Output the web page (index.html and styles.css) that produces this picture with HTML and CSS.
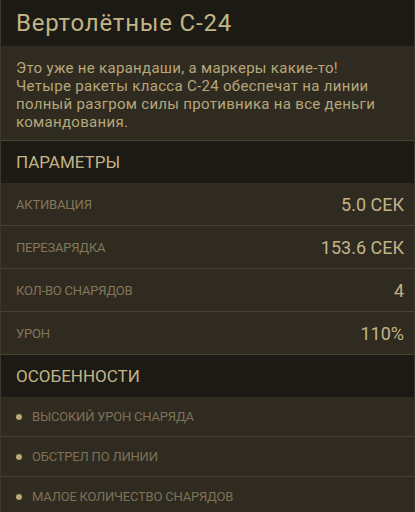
FILE: index.html
```html
<!DOCTYPE html>
<html lang="ru">
<head>
    <meta charset="UTF-8">
    <meta name="viewport" content="width=device-width, initial-scale=1.0">
    <title>Вертолётные С-24</title>
    <link rel="stylesheet" href="styles.css">
</head>
<body>
    <div class="panel">
        <header class="title">
            <h1>Вертолётные С-24</h1>
        </header>
        <p class="desc">Это уже не карандаши, а маркеры какие-то!<br>Четыре ракеты класса С-24 обеспечат на линии полный разгром силы противника на все деньги командования.</p>

        <h2 class="section">ПАРАМЕТРЫ</h2>
        <div class="stat">
            <span class="stat-name">АКТИВАЦИЯ</span>
            <span class="stat-value">5.0 СЕК</span>
        </div>
        <div class="stat">
            <span class="stat-name">ПЕРЕЗАРЯДКА</span>
            <span class="stat-value">153.6 СЕК</span>
        </div>
        <div class="stat">
            <span class="stat-name">КОЛ-ВО СНАРЯДОВ</span>
            <span class="stat-value">4</span>
        </div>
        <div class="stat">
            <span class="stat-name">УРОН</span>
            <span class="stat-value">110%</span>
        </div>

        <h2 class="section">ОСОБЕННОСТИ</h2>
        <ul class="features">
            <li>ВЫСОКИЙ УРОН СНАРЯДА</li>
            <li>ОБСТРЕЛ ПО ЛИНИИ</li>
            <li>МАЛОЕ КОЛИЧЕСТВО СНАРЯДОВ</li>
        </ul>
    </div>
</body>
</html>
```

FILE: styles.css
```css
body {
    margin: 0;
    padding: 0;
    background: #302b21;
    font-family: Roboto, "Liberation Sans", sans-serif;
}

.panel {
    width: 415px;
    height: 512px;
    box-sizing: border-box;
    border-left: 1px solid #3d3729;
    border-right: 1px solid #3d3729;
    background: #302b21;
    overflow: hidden;
}

.title {
    background: #1c1a15;
    height: 46px;
    display: flex;
    align-items: center;
    padding: 0 15px;
}

.title h1 {
    margin: 0;
    font-size: 24px;
    font-weight: 400;
    letter-spacing: 0.8px;
    color: #c3b486;
}

.desc {
    margin: 0;
    padding: 13px 15px 9px;
    font-size: 15px;
    line-height: 18px;
    letter-spacing: 0.3px;
    color: #b6a77a;
    border-bottom: 1px solid #4a4332;
}

.section {
    margin: 0;
    height: 42px;
    display: flex;
    align-items: center;
    padding: 0 15px;
    background: #1c1a15;
    font-size: 17px;
    font-weight: 400;
    color: #c3b486;
}

.stat {
    height: 42px;
    display: flex;
    align-items: center;
    justify-content: space-between;
    padding: 0 10px 0 15px;
    border-bottom: 1px solid #4a4332;
}

.stat-name {
    font-size: 13px;
    letter-spacing: -0.2px;
    color: #83775a;
}

.stat-value {
    font-size: 18px;
    color: #c2b387;
}

.features {
    list-style: none;
    margin: 0;
    padding: 0;
}

.features li {
    height: 39px;
    display: flex;
    align-items: center;
    gap: 10px;
    padding: 0 15px;
    font-size: 13px;
    letter-spacing: -0.2px;
    color: #7d7156;
    border-bottom: 1px solid #4a4332;
}

.features li::before {
    content: "";
    width: 6px;
    height: 6px;
    border-radius: 50%;
    background: #b8a878;
}
```
